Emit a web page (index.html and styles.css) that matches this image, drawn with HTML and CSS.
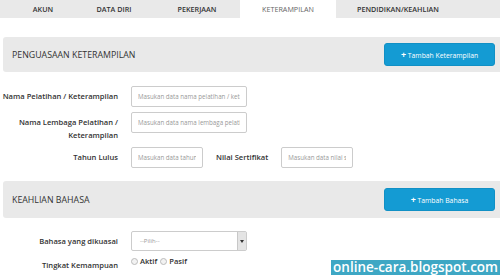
FILE: index.html
```html
<!DOCTYPE html>
<html lang="id">
<head>
  <meta charset="UTF-8" />
  <title>Keterampilan</title>
  <link rel="stylesheet" href="styles.css">
</head>
<body>
  <div class="tabs">
    <div class="tab t-akun">AKUN</div>
    <div class="tab t-diri">DATA DIRI</div>
    <div class="tab t-kerja">PEKERJAAN</div>
    <div class="tab t-skill active">KETERAMPILAN</div>
    <div class="tab t-didik">PENDIDIKAN/KEAHLIAN</div>
  </div>

  <!-- Penguasaan keterampilan -->
  <div class="panel first">
    <div class="panel-title">PENGUASAAN KETERAMPILAN</div>
    <button class="btn-add"><span class="plus">+</span> Tambah Keterampilan</button>
  </div>
  <div class="form first">
    <div class="row">
      <label class="lbl">Nama Pelatihan / Keterampilan</label>
      <input class="inp" placeholder="Masukan data nama pelatihan / keterampilan">
    </div>
    <div class="row">
      <label class="lbl">Nama Lembaga Pelatihan /<br>Keterampilan</label>
      <input class="inp" placeholder="Masukan data nama lembaga pelatihan">
    </div>
    <div class="row">
      <label class="lbl">Tahun Lulus</label>
      <input class="inp short" placeholder="Masukan data tahun">
      <label class="lbl-inline">Nilai Sertifikat</label>
      <input class="inp short" placeholder="Masukan data nilai sertifikat">
    </div>
  </div>

  <!-- Keahlian bahasa -->
  <div class="panel second">
    <div class="panel-title">KEAHLIAN BAHASA</div>
    <button class="btn-add"><span class="plus">+</span> Tambah Bahasa</button>
  </div>
  <div class="form second">
    <div class="row">
      <label class="lbl">Bahasa yang dikuasai</label>
      <div class="select">
        <span>--Pilih--</span>
        <span class="arrow"></span>
      </div>
    </div>
    <div class="row level">
      <label class="lbl">Tingkat Kemampuan</label>
      <div class="radios">
        <span class="radio"></span>Aktif
        <span class="radio gap"></span>Pasif
      </div>
    </div>
  </div>

  <div class="watermark">online-cara.blogspot.com</div>
</body>
</html>
```

FILE: styles.css
```css
body {
  margin: 0;
  font-family: "Open Sans", "Noto Sans", sans-serif;
  background: #fff;
  color: #333;
  width: 500px;
  height: 275px;
  overflow: hidden;
  position: relative;
}

/* Tabs */
.tabs {
  display: flex;
  height: 18px;
  background: #e9e9e9;
  padding-left: 12px;
}
.tab {
  flex-shrink: 0;
  white-space: nowrap;
  font-size: 7.2px;
  font-weight: 600;
  color: #333;
  display: flex;
  align-items: center;
  justify-content: center;
}
.t-akun { width: 62px; }
.t-diri { width: 80px; }
.t-kerja { width: 86px; }
.t-skill { width: 96px; }
.t-didik { width: 124px; }
.tab.active {
  background: #fff;
  color: #666;
  font-weight: 400;
}

/* Section header panels */
.panel {
  margin-left: 3px;
  background: #e9e9e9;
  border-radius: 3px 0 0 3px;
  display: flex;
  align-items: center;
  justify-content: space-between;
  padding: 0 5px 0 9px;
}
.panel.first {
  margin-top: 19px;
  height: 35px;
}
.panel.second {
  margin-top: 13px;
  height: 37px;
}
.panel-title {
  font-size: 8.8px;
  color: #333;
}
.btn-add {
  width: 111px;
  height: 23px;
  background: #149bd3;
  border: 1px solid #1190c5;
  border-radius: 3px;
  color: #fff;
  font-family: inherit;
  font-size: 6.8px;
  padding: 0;
}
.btn-add .plus {
  font-weight: 700;
  font-size: 9px;
}

/* Form rows */
.form.first {
  padding-top: 14px;
}
.form.second {
  padding-top: 13px;
}
.row {
  display: flex;
  align-items: flex-start;
  margin-bottom: 5px;
}
.lbl {
  width: 118px;
  flex-shrink: 0;
  text-align: right;
  font-size: 7.6px;
  font-weight: 600;
  color: #333;
  margin-right: 13px;
  line-height: 13px;
  padding-top: 4px;
  white-space: nowrap;
}
.lbl-inline {
  font-size: 7.6px;
  font-weight: 600;
  color: #333;
  line-height: 13px;
  padding-top: 4px;
  margin: 0 13px 0 13px;
}
.inp {
  width: 116px;
  height: 21px;
  box-sizing: border-box;
  border: 1px solid #ccc;
  border-radius: 2px;
  padding: 0 6px;
  font-family: inherit;
  font-size: 6.2px;
  color: #555;
  margin: 0;
}
.inp::placeholder {
  color: #999;
}
.inp.short {
  width: 72px;
}

/* Select */
.select {
  width: 116px;
  height: 20px;
  box-sizing: border-box;
  border: 1px solid #ccc;
  border-radius: 2px;
  display: flex;
  align-items: center;
  justify-content: space-between;
  padding-left: 8px;
  font-size: 6px;
  color: #999;
}
.select .arrow {
  width: 8px;
  height: 18px;
  background: #e4e4e4;
  border-left: 1px solid #c8c8c8;
  position: relative;
}
.select .arrow::after {
  content: "";
  position: absolute;
  left: 2px;
  top: 8px;
  border-left: 2px solid transparent;
  border-right: 2px solid transparent;
  border-top: 3px solid #333;
}

/* Radios */
.row.level {
  margin-top: 3px;
}
.row.level .lbl {
  padding-top: 3px;
}
.radios {
  font-size: 7.6px;
  font-weight: 600;
  color: #333;
  display: flex;
  align-items: center;
  line-height: 11px;
}
.radio {
  width: 5px;
  height: 5px;
  border: 1px solid #bbb;
  border-radius: 50%;
  background: #f2f2f2;
  margin-right: 2px;
}
.radio.gap {
  margin-left: 3px;
}

/* Watermark overlay */
.watermark {
  position: absolute;
  right: 0;
  bottom: 0;
  background: #3ea7c4;
  color: #fff;
  font-size: 13.5px;
  font-weight: 600;
  line-height: 15px;
  padding: 0 2px;
}
```
